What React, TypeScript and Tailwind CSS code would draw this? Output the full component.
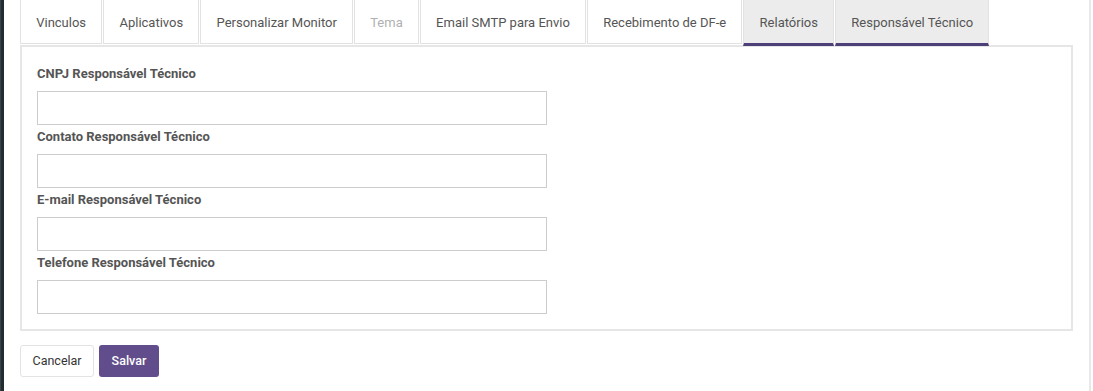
const tabs = [
  { label: "Vinculos" },
  { label: "Aplicativos" },
  { label: "Personalizar Monitor" },
  { label: "Tema", disabled: true },
  { label: "Email SMTP para Envio" },
  { label: "Recebimento de DF-e" },
  { label: "Relatórios", active: true },
  { label: "Responsável Técnico", active: true },
];

const fields = [
  "CNPJ Responsável Técnico",
  "Contato Responsável Técnico",
  "E-mail Responsável Técnico",
  "Telefone Responsável Técnico",
];

function Tab({ label, active, disabled }: { label: string; active?: boolean; disabled?: boolean }) {
  if (active) {
    return (
      <div className="h-[47px] px-[15.2px] pt-[3px] flex items-center bg-[#ececec] border border-[#e2e2e2] border-b-[3px] border-b-[#4d3f78] text-[13px] text-[#555] mr-px">
        {label}
      </div>
    );
  }
  return (
    <div
      className={
        "h-[45px] px-[15.2px] pt-[3px] flex items-center bg-white border border-[#e2e2e2] text-[13px] mr-px " +
        (disabled ? "text-[#b0b0b0]" : "text-[#555]")
      }
    >
      {label}
    </div>
  );
}

export default function App() {
  return (
    <div className="flex w-[1093px] h-[391px] bg-white overflow-hidden" style={{ fontFamily: "Roboto, 'Liberation Sans', sans-serif" }}>
      <div className="w-px bg-[#3a4248]" />
      <div className="w-[3px] bg-[#222d32]" />
      <div className="flex-1 px-4">
        <div className="flex items-start -mt-px relative z-10">
          {tabs.map((t) => (
            <Tab key={t.label} {...t} />
          ))}
        </div>
        <div className="-mt-[1px] border-2 border-[#e6e6e6] pt-[18px] px-[15px] pb-[15px]">
          {fields.map((f, i) => (
            <div key={f} className={i < fields.length - 1 ? "mb-[3px]" : ""}>
              <label className="block text-[13px] leading-[17px] font-bold text-[#555] mb-[9px]">{f}</label>
              <input type="text" className="block w-[510px] h-[34px] border border-[#cccccc] bg-white outline-none" />
            </div>
          ))}
        </div>
        <div className="flex gap-[5px] mt-[14px]">
          <button className="h-[32px] px-[11.5px] border border-[#e3e3e3] rounded-[3px] bg-white text-[12.5px] text-[#333]">
            Cancelar
          </button>
          <button className="h-[32px] px-[12.5px] rounded-[3px] bg-[#624d8c] text-[12.5px] font-medium text-white">
            Salvar
          </button>
        </div>
      </div>
      <div className="w-[2px] bg-[#e8e8e8]" />
      <div className="w-[2px] bg-white" />
    </div>
  );
}
